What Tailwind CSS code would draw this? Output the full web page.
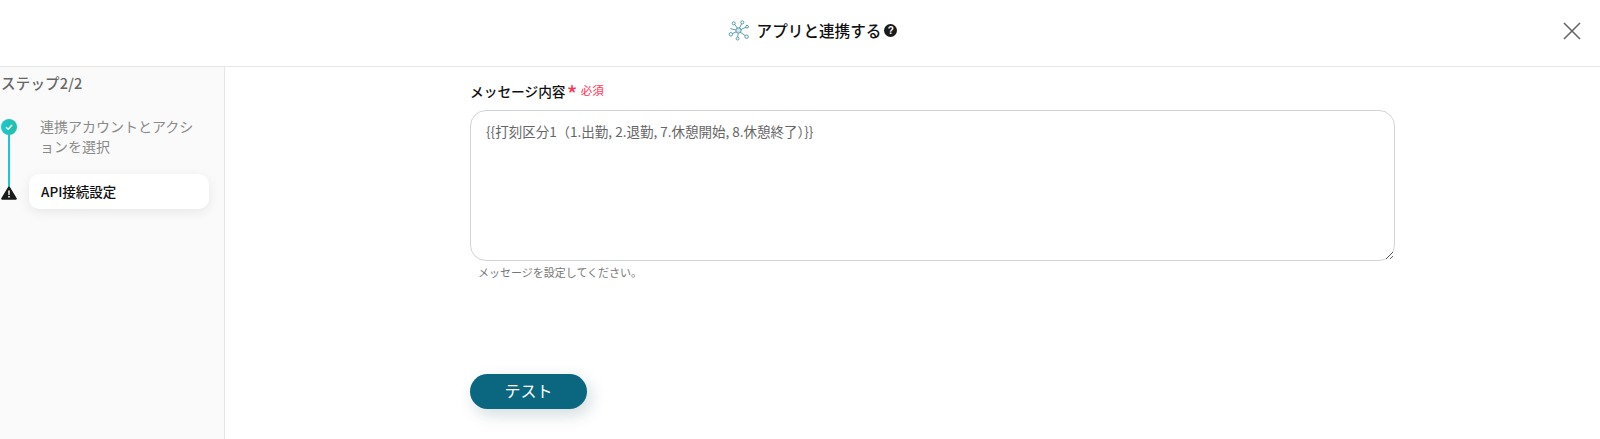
<!DOCTYPE html>
<html lang="ja">
<head>
    <meta charset="UTF-8">
    <meta name="viewport" content="width=device-width, initial-scale=1.0">
    <title>アプリと連携する</title>
    <script src="https://cdn.jsdelivr.net/npm/@tailwindcss/browser@4"></script>
</head>
<body class="bg-white text-black h-[439px] overflow-hidden flex flex-col font-['Noto_Sans_CJK_JP','Noto_Sans',sans-serif]">

    <!-- Header -->
    <header class="relative h-[67px] flex-none border-b border-[#e6e6e6] flex items-center justify-center pb-[6px]">
        <div class="flex items-center ml-[25px]">
            <svg class="w-[21px] h-[21px] mr-[8px]" viewBox="0 0 22 22" fill="none" stroke="#3f8ca1" stroke-width="0.9">
                <circle cx="11" cy="11" r="2.8" fill="#cfe5ea"/>
                <path d="M10 8.5L6 3.5M12 8.5L15 2.5M13.5 10L20 7M13 12.8L19.5 17.5M10.8 14L10 18M8.6 12.4L3 15M8.2 10.5L2.5 9"/>
                <circle cx="6" cy="3.5" r="1.6" fill="white"/>
                <circle cx="15" cy="2.5" r="1.6" fill="white"/>
                <circle cx="20" cy="7" r="1.4" fill="white"/>
                <circle cx="19.5" cy="17.5" r="1.8" fill="white"/>
                <circle cx="10" cy="19.5" r="1.5" fill="white"/>
                <circle cx="3" cy="15" r="1.8" fill="white"/>
            </svg>
            <h1 class="text-[15.6px] leading-[22px] font-medium text-[#111]">アプリと連携する</h1>
            <span class="ml-[3px] w-[13px] h-[13px] rounded-full bg-[#1a1a1a] text-white text-[10px] leading-[13px] font-bold text-center font-['Liberation_Sans',sans-serif]">?</span>
        </div>
        <svg class="absolute left-[1563px] top-[22px] w-[18px] h-[18px]" viewBox="0 0 18 18" fill="none" stroke="#666" stroke-width="1.6">
            <path d="M1 1L17 17M17 1L1 17"/>
        </svg>
    </header>

    <div class="flex flex-1 min-h-0">
        <!-- Steps -->
        <aside class="w-[225px] flex-none bg-[#fafafa] border-r border-[#e6e6e6] pt-[6px]">
            <p class="pl-[1px] text-[14.5px] leading-[20px] font-medium tracking-[0.2px] text-[#666]">ステップ2/2</p>
            <div class="relative mt-[23px]">
                <div class="absolute left-[8px] top-[6px] w-[2px] h-[66px] bg-[#1cc8cf]"></div>
                <div class="flex items-start">
                    <div class="relative w-[29px] flex-none pl-[1px] pt-[3px]">
                        <div class="w-[16px] h-[16px] rounded-full bg-gradient-to-r from-[#1cc8cf] to-[#24bfa5] flex items-center justify-center">
                            <svg class="w-[10px] h-[10px]" viewBox="0 0 10 10" fill="none" stroke="white" stroke-width="1.4"><path d="M2 5.2L4.2 7.2L8 3"/></svg>
                        </div>
                    </div>
                    <p class="ml-[11px] w-[156px] text-[14px] leading-[20px] text-[#8a8a8a]">連携アカウントとアクションを選択</p>
                </div>
                <div class="flex items-center mt-[18px]">
                    <div class="relative w-[29px] flex-none pt-[3px]">
                        <svg class="w-[16px] h-[14px] ml-[1px]" viewBox="0 0 16 14"><path fill="#1a1a1a" d="M8 0.5a1 1 0 0 1 .9 .5l6.8 11.3a1 1 0 0 1-.9 1.5H1.2a1 1 0 0 1-.9-1.5L7.1 1A1 1 0 0 1 8 .5z"/><path fill="white" d="M7.2 4.5h1.6l-.2 4.6H7.4zM7.2 10h1.6v1.6H7.2z"/></svg>
                    </div>
                    <div class="w-[180px] h-[35px] rounded-[10px] bg-white shadow-[0_3px_12px_rgba(0,0,0,0.08)] flex items-center pl-[12px] text-[13.5px] font-medium text-[#111]">API接続設定</div>
                </div>
            </div>
        </aside>

        <!-- Form -->
        <main class="flex-1 pl-[245px] pt-[13px]">
            <div class="w-[925px]">
                <label class="flex items-center h-[22px] text-[13.7px] font-medium text-[#111]">メッセージ内容
                    <span class="ml-[1px] mt-[5px] text-[24px] leading-[22px] text-[#ff3355] font-normal">*</span>
                    <span class="ml-[3px] text-[11.5px] text-[#ff3355] font-normal">必須</span>
                </label>
                <textarea class="block mt-[8px] w-full h-[151px] rounded-[16px] border border-[#d0d4da] px-[15px] py-[10px] text-[13.5px] leading-[20px] text-[#666] outline-none">{{打刻区分1（1.出勤, 2.退勤, 7.休憩開始, 8.休憩終了）}}</textarea>
                <p class="mt-[2px] pl-[8px] text-[11px] leading-[18px] text-[#777]">メッセージを設定してください。</p>
                <button class="mt-[93px] w-[117px] h-[35px] pb-[3px] rounded-full bg-[#0b6780] text-white text-[16px] shadow-[4px_6px_16px_rgba(11,60,80,0.18)]">テスト</button>
            </div>
        </main>
    </div>
</body>
</html>
